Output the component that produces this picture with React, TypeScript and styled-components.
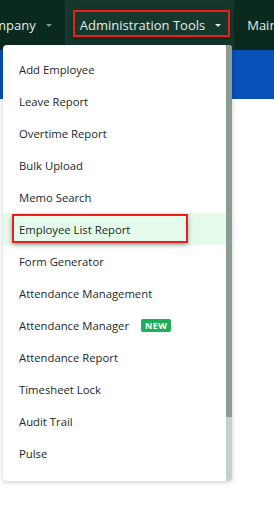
import React from 'react';
import styled, { createGlobalStyle } from 'styled-components';

const GlobalStyle = createGlobalStyle`
  html, body {
    margin: 0;
    padding: 0;
    background: #ffffff;
    font-family: "Open Sans", "Liberation Sans", sans-serif;
  }
`;

const Page = styled.div`
  position: relative;
  width: 274px;
  height: 506px;
  overflow: hidden;
  background: #ffffff;
`;

const NavBar = styled.nav`
  display: flex;
  align-items: stretch;
  height: 50px;
  margin-left: -35px;
  background: #0b2a1f;
`;

const NavItem = styled.div<{ $active?: boolean }>`
  position: relative;
  display: flex;
  align-items: center;
  gap: 10px;
  padding: ${(p) => (p.$active ? '0 13px 0 15px' : '0 13px')};
  background: ${(p) => (p.$active ? '#16382c' : 'transparent')};
  color: #e3ebe7;
  font-size: 13px;
  white-space: nowrap;
`;

const Caret = styled.span<{ $dim?: boolean }>`
  width: 0;
  height: 0;
  border-left: 3px solid transparent;
  border-right: 3px solid transparent;
  border-top: 3px solid ${(p) => (p.$dim ? '#7f918a' : '#e3ebe7')};
`;

const Mark = styled.span`
  position: absolute;
  border: 2px solid #ee1c1c;
  box-shadow: 0 2px 5px rgba(0, 0, 0, 0.35);
  pointer-events: none;
`;

const NavMark = styled(Mark)`
  left: 8px;
  right: 4px;
  top: 10px;
  bottom: 13px;
`;

const BlueBand = styled.div`
  height: 49px;
  background: #0650b8;
`;

const Menu = styled.div`
  position: absolute;
  left: 3px;
  top: 45px;
  width: 229px;
  height: 436px;
  display: flex;
  background: #ffffff;
  border-radius: 4px;
  box-shadow: 0 1px 5px rgba(0, 0, 0, 0.22);
  overflow: hidden;
`;

const List = styled.ul`
  flex: 1;
  list-style: none;
  margin: 0;
  padding: 8px 0 12px;
`;

const Item = styled.li<{ $hl?: boolean }>`
  position: relative;
  display: flex;
  align-items: center;
  gap: 12px;
  height: 32px;
  padding-left: 16px;
  background: ${(p) => (p.$hl ? '#e4fbec' : 'transparent')};
  color: #1a2928;
  font-size: 11.3px;
`;

const ItemMark = styled(Mark)`
  left: 9px;
  width: 172px;
  top: 1px;
  bottom: 2px;
`;

const Badge = styled.span`
  background: #1cae5c;
  color: #ffffff;
  font-size: 9px;
  font-weight: 700;
  letter-spacing: 0.4px;
  padding: 0 4px;
  line-height: 13px;
  border-radius: 2px;
`;

const Scroll = styled.div`
  width: 6px;
  display: flex;
  flex-direction: column;
  background: #c5d1cc;
`;

const Thumb = styled.div`
  height: 372px;
  background: #8b9c95;
`;

const items = [
  'Add Employee',
  'Leave Report',
  'Overtime Report',
  'Bulk Upload',
  'Memo Search',
  'Employee List Report',
  'Form Generator',
  'Attendance Management',
  'Attendance Manager',
  'Attendance Report',
  'Timesheet Lock',
  'Audit Trail',
  'Pulse',
];

const App: React.FC = () => (
  <Page>
    <GlobalStyle />
    <NavBar>
      <NavItem>
        Company <Caret $dim />
      </NavItem>
      <NavItem $active>
        Administration Tools <Caret />
        <NavMark />
      </NavItem>
      <NavItem>Maintenance</NavItem>
    </NavBar>
    <BlueBand />
    <Menu>
      <List>
        {items.map((name) => (
          <Item key={name} $hl={name === 'Employee List Report'}>
            {name}
            {name === 'Attendance Manager' && <Badge>NEW</Badge>}
            {name === 'Employee List Report' && <ItemMark />}
          </Item>
        ))}
      </List>
      <Scroll>
        <Thumb />
      </Scroll>
    </Menu>
  </Page>
);

export default App;
